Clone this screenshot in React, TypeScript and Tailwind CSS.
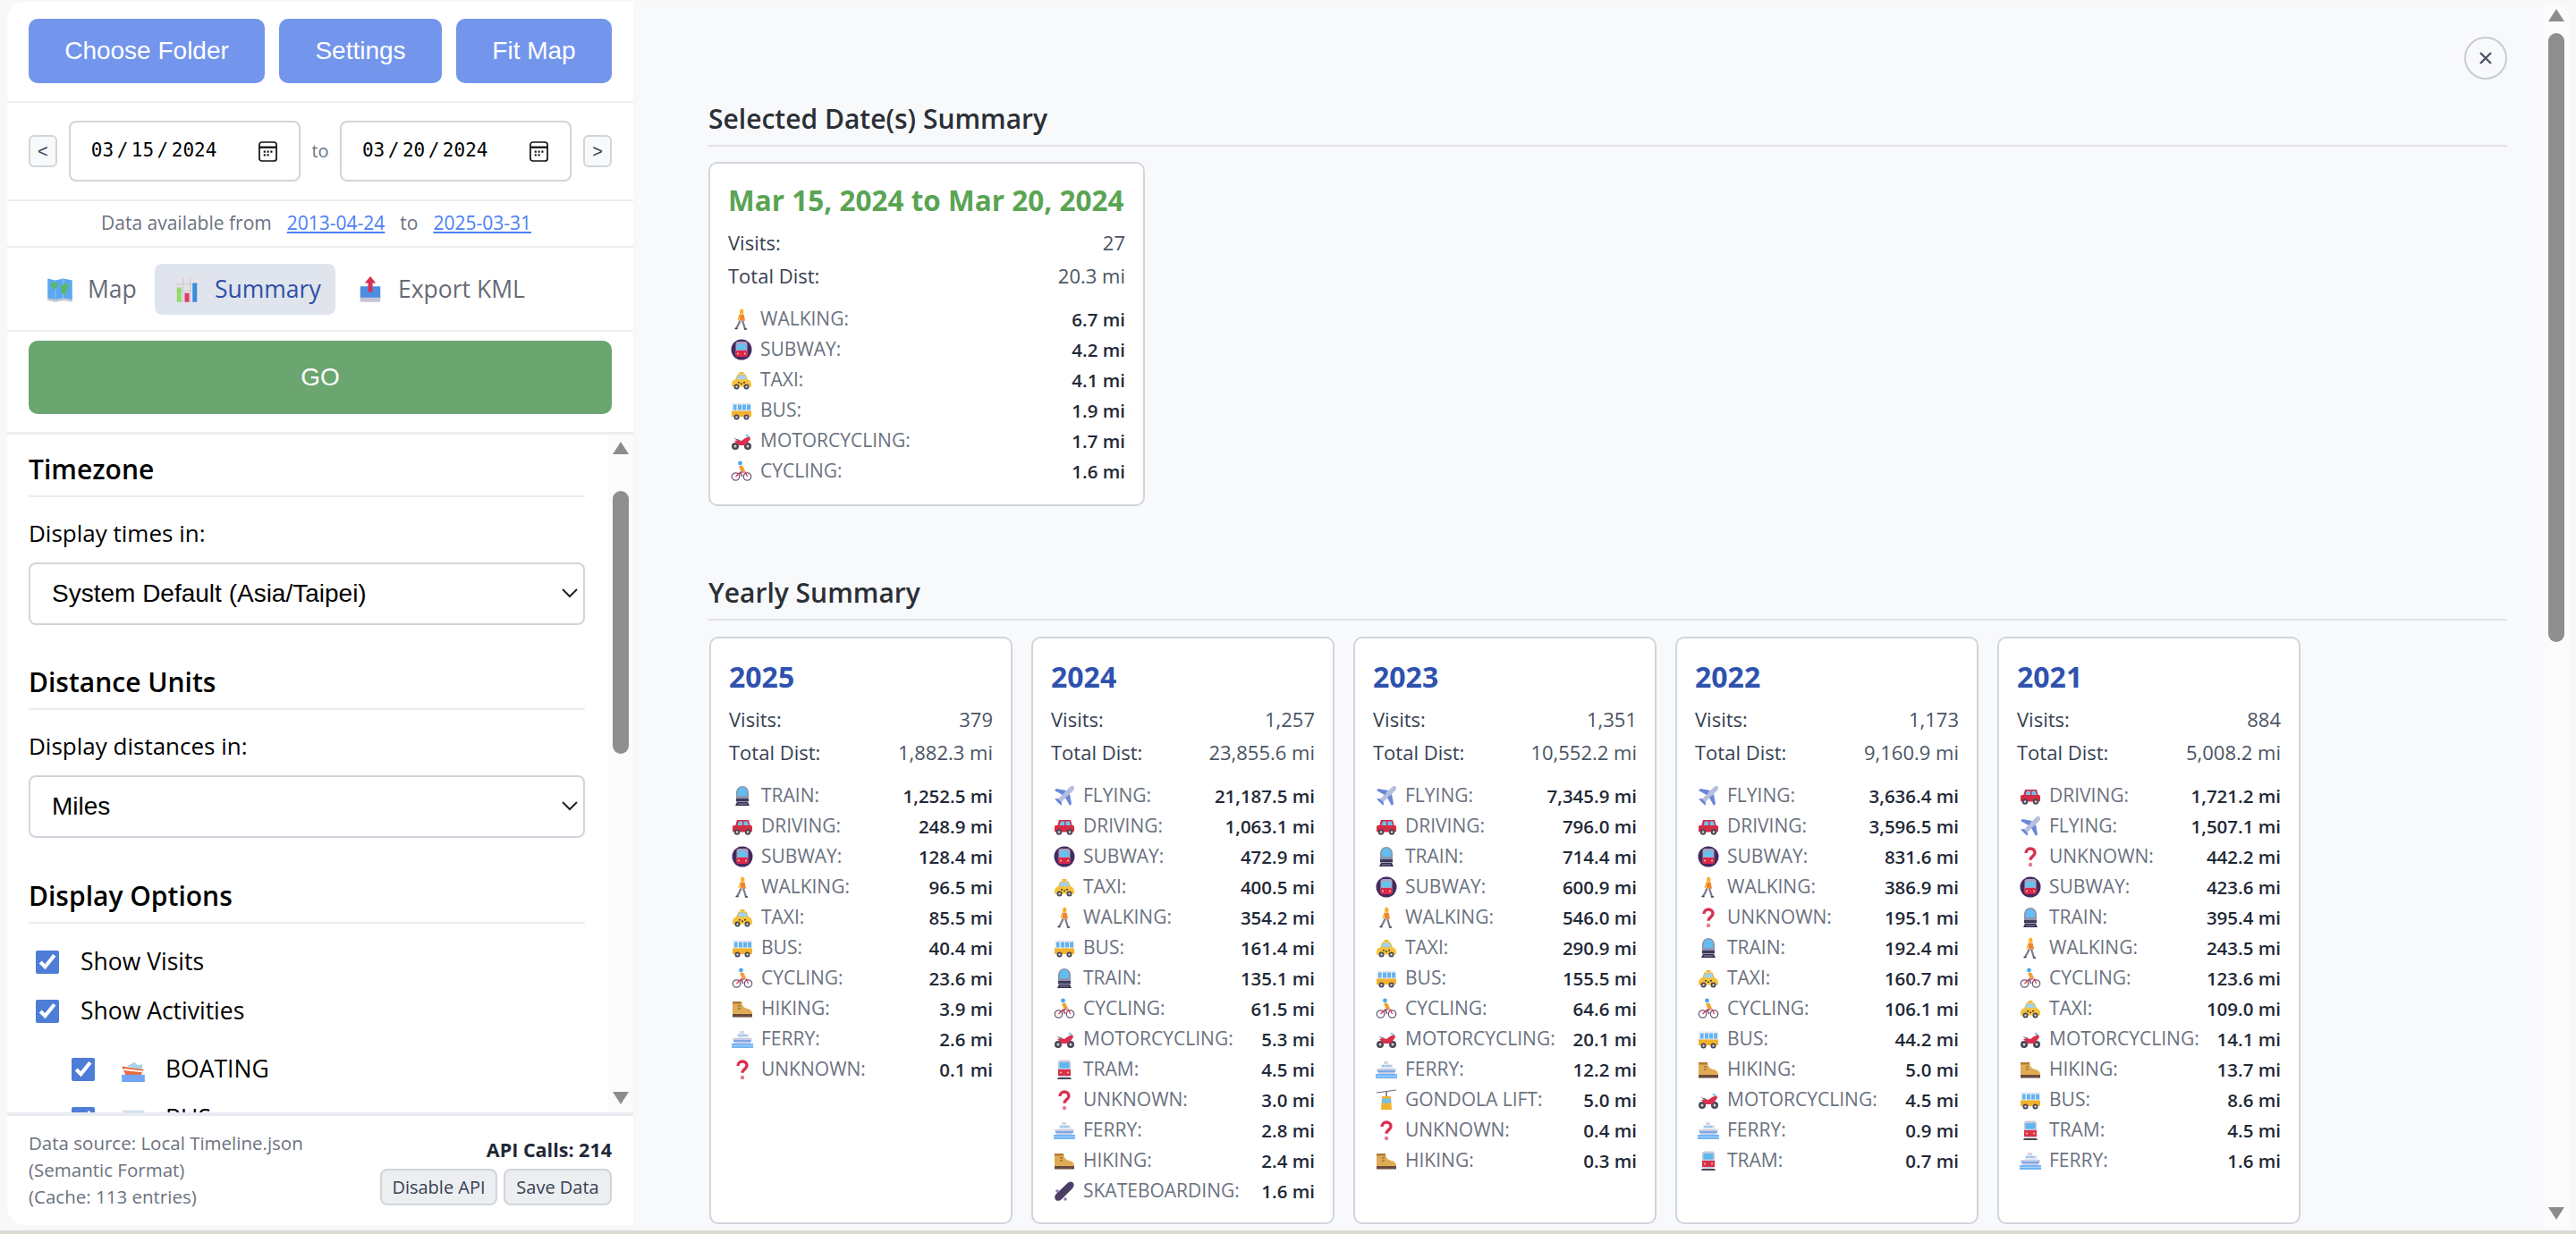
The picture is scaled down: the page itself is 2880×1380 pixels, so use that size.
import React from 'react';

const SANS = 'font-["Open_Sans",sans-serif]';

type IconName =
  | 'walking' | 'subway' | 'taxi' | 'bus' | 'motorcycling' | 'cycling' | 'train' | 'driving'
  | 'hiking' | 'ferry' | 'unknown' | 'flying' | 'tram' | 'skateboarding' | 'gondola' | 'boating'
  | 'map' | 'chart' | 'export';

const Emoji: React.FC<{ name: IconName; className?: string }> = ({ name, className = 'w-6 h-6' }) => {
  const shapes: Record<IconName, React.ReactNode> = {
    walking: (
      <>
        <path d="M10 4.500c0-2.500 1-4 2.200-4s2.300 1.500 2.300 4c0 1-1 1.500-2.300 1.500S10 5.500 10 4.500z" fill="#fbb125" />
        <path d="M9.500 6.500h5l1.500 7-2 .5-.5-2.500v2H10z" fill="#f0842c" />
        <path d="M10.500 13.500L8.500 18 6 22.500M13 13.500l1.500 4.500 1.500 5" fill="none" stroke="#7d7a8c" strokeWidth="2.200" />
        <path d="M10 7.500l-2 5.500" stroke="#fbb125" strokeWidth="1.400" fill="none" />
        <path d="M4.500 22.500h3M15 23h3" stroke="#433d57" strokeWidth="1.400" />
      </>
    ),
    subway: (
      <>
        <circle cx="12" cy="12" r="11.500" fill="#46295f" />
        <rect x="5.500" y="3" width="13" height="17" rx="3" fill="#a6a3c4" />
        <rect x="7" y="6" width="10" height="6" rx="1" fill="#63c3ef" />
        <rect x="5.500" y="13" width="13" height="7" rx="2" fill="#d9274f" />
        <circle cx="8" cy="16.500" r="1" fill="#ffd34d" />
        <circle cx="16" cy="16.500" r="1" fill="#ffd34d" />
      </>
    ),
    taxi: (
      <>
        <path d="M5.500 12l2.500-6h8l2.500 6z" fill="#9fd3f5" stroke="#f2b632" strokeWidth="1.200" />
        <rect x="9.500" y="3" width="5" height="2.500" rx=".6" fill="#f2b632" />
        <path d="M1 17c0-3.500 2-5.500 5-5.500h12c3 0 5 2 5 5.500v2.500H1z" fill="#f5c33b" />
        <path d="M8 14h2v1.500H8zM11 15.500h2V17h-2zM14 14h2v1.500h-2z" fill="#4a3a32" />
        <circle cx="6.500" cy="19.500" r="3" fill="#4a4653" />
        <circle cx="6.500" cy="19.500" r="1.200" fill="#d5d3df" />
        <circle cx="17.500" cy="19.500" r="3" fill="#4a4653" />
        <circle cx="17.500" cy="19.500" r="1.200" fill="#d5d3df" />
      </>
    ),
    bus: (
      <>
        <rect x="1" y="3.500" width="22" height="15" rx="1.500" fill="#eceaf1" />
        <rect x="1" y="12.500" width="22" height="6.500" fill="#f2b22f" />
        <path d="M3 5.500h3.500v6H3zM8 5.500h4v6H8zM13 5.500h4v6h-4zM18 5.500h4v6h-4z" fill="#62b4f2" />
        <circle cx="6.500" cy="19.500" r="3" fill="#4a4653" />
        <circle cx="6.500" cy="19.500" r="1.200" fill="#d5d3df" />
        <circle cx="17.500" cy="19.500" r="3" fill="#4a4653" />
        <circle cx="17.500" cy="19.500" r="1.200" fill="#d5d3df" />
      </>
    ),
    motorcycling: (
      <>
        <circle cx="5" cy="18" r="4" fill="#4a4653" />
        <circle cx="5" cy="18" r="1.500" fill="#d5d3df" />
        <circle cx="19" cy="18" r="4" fill="#4a4653" />
        <circle cx="19" cy="18" r="1.500" fill="#d5d3df" />
        <path d="M4 12l5-1 3 1 4-3 5-2 1 3-3 4-3 3H9z" fill="#d9304f" />
        <path d="M3 9l6 1.500L8 12z" fill="#6b5e72" />
        <path d="M17 5.500l3 1.500" stroke="#7fc3ee" strokeWidth="2" />
      </>
    ),
    cycling: (
      <>
        <circle cx="5.500" cy="18" r="4.200" fill="none" stroke="#6b5a78" strokeWidth="1.300" />
        <circle cx="18.500" cy="18" r="4.200" fill="none" stroke="#6b5a78" strokeWidth="1.300" />
        <path d="M5.500 18l5-5h6l2 5M10.500 13l2 5" fill="none" stroke="#d9304f" strokeWidth="1.200" />
        <circle cx="10.500" cy="3" r="2.400" fill="#4aa8ed" />
        <path d="M9 6.500l4-1 3 6-4 1.500z" fill="#f0a02c" />
        <path d="M12.500 12l-1 3.500 1.500 2" fill="none" stroke="#7d7a8c" strokeWidth="1.600" />
      </>
    ),
    train: (
      <>
        <path d="M5 9c0-5 3-8 7-8s7 3 7 8v9H5z" fill="#8f94ad" />
        <path d="M7 8c0-3.500 2-5.500 5-5.500S17 4.500 17 8v4H7z" fill="#62bdf0" />
        <rect x="5" y="15" width="14" height="3.500" fill="#3e3a5c" />
        <path d="M6 19l-2 4h16l-2-4z" fill="#34304f" />
        <path d="M7 21h10" stroke="#a9a6c0" strokeWidth=".8" />
      </>
    ),
    driving: (
      <>
        <path d="M6 5h13l2 7H4z" fill="#d32c43" />
        <path d="M8 6.500h4v4.500H6.500zM13.500 6.500h4.300l1.200 4.500h-5.500z" fill="#6fc1f0" />
        <rect x="1" y="11" width="22" height="7.500" rx="1.500" fill="#d32c43" />
        <circle cx="6" cy="18.500" r="3.200" fill="#4a4653" />
        <circle cx="6" cy="18.500" r="1.300" fill="#d5d3df" />
        <circle cx="18" cy="18.500" r="3.200" fill="#4a4653" />
        <circle cx="18" cy="18.500" r="1.300" fill="#d5d3df" />
      </>
    ),
    hiking: (
      <>
        <path d="M1 4h10c.500 4 1.500 6 5 7.500 4 1 7 2 7 6.500H1z" fill="#e0ab55" />
        <path d="M1 4h10v2.500H1z" fill="#b27a35" />
        <path d="M7 9h3M7 12h3" stroke="#7d5a2c" strokeWidth="1.200" />
        <rect x="1" y="18" width="22" height="3.500" fill="#6b4a3e" />
      </>
    ),
    ferry: (
      <>
        <path d="M9 3h5v3H9z" fill="#d9d6e4" />
        <path d="M6 6h13l1 5H6z" fill="#eceaf1" />
        <path d="M7.500 8h10" stroke="#4aa8ed" strokeWidth="1.300" strokeDasharray="1.500 .8" />
        <path d="M1 11h22l-2 6H3z" fill="#c9cde6" />
        <path d="M2 14h20" stroke="#4f8fe8" strokeWidth="1.200" />
        <rect x="0" y="17" width="24" height="5" fill="#74b5f5" />
        <path d="M0 19.500h24" stroke="#a6d3fa" strokeWidth="1" />
      </>
    ),
    unknown: (
      <>
        <path d="M7 8c0-3 2.300-5 5-5s5 2 5 4.700c0 3.800-5 4-5 8" fill="none" stroke="#d9304f" strokeWidth="3.400" />
        <circle cx="12" cy="21" r="2.200" fill="#e8798e" />
      </>
    ),
    flying: (
      <>
        <path d="M22.500 1.500c-1.500-1-3.500-.3-5 1.200L4 16.500l3.500 3.500L21.500 6.500c1.500-1.500 2-3.500 1-5z" fill="#b7bfe0" />
        <path d="M14 6L3 4 1 6l9 5zM18 10l2 11-2 2-5-9z" fill="#6a86d8" />
        <path d="M4.500 15L1 15.500 8.500 23 9 19.500z" fill="#6a86d8" />
      </>
    ),
    tram: (
      <>
        <rect x="5" y="1.500" width="14" height="19" rx="3" fill="#c9c7db" />
        <rect x="6.500" y="4" width="11" height="6.500" rx="1" fill="#5eb8ee" />
        <rect x="5" y="12" width="14" height="7" fill="#d9304f" />
        <circle cx="8" cy="15.500" r="1" fill="#ffd34d" />
        <circle cx="16" cy="15.500" r="1" fill="#ffd34d" />
        <path d="M5 21h14l1 2H4z" fill="#4a4653" />
      </>
    ),
    skateboarding: (
      <>
        <path d="M21.500 2.500c2 2 1 5-1 7L9 21c-2 2-5 2.500-6.500 1S.500 17.500 3 15L15 3.500c2-2 4.500-3 6.500-1z" fill="#4a3d66" />
        <circle cx="4" cy="12" r="1.800" fill="#8f7fb0" />
        <circle cx="13" cy="21" r="1.800" fill="#8f7fb0" />
      </>
    ),
    gondola: (
      <>
        <path d="M1 4L23 1" stroke="#6b6878" strokeWidth="1.200" />
        <path d="M12 3v6" stroke="#6b6878" strokeWidth="1.500" />
        <path d="M7 8h10l1 15H6z" fill="#f2b22f" />
        <rect x="7" y="10.500" width="10" height="5" fill="#6fc1f0" />
      </>
    ),
    boating: (
      <>
        <path d="M6 9l7-4 3 3 5-1-1 5z" fill="#a6d3e8" />
        <path d="M1 9l21 3-3 6H5z" fill="#e86a3c" />
        <path d="M3 12l18 2" stroke="#fff" strokeWidth="1.600" />
        <rect x="1" y="17" width="22" height="7" fill="#74a5f5" />
      </>
    ),
    map: (
      <>
        <path d="M1 2l7 1.500L15 2l8 1.500V21l-8-1.500L8 21l-7-1.500z" fill="#5ba8ee" />
        <path d="M8 3.500V21M15 2v17.500" stroke="#8ec6f5" strokeWidth=".8" />
        <path d="M4 6l5-1 1 4-3 3-1-2-2-1zM12 9l5-3 3 2-2 4-1 5-3-2z" fill="#5db56a" />
        <path d="M1 19.500L8 21l7-1.500 8 1.500v2l-8-1.500-7 1.500-7-1.500z" fill="#c5c3d2" />
      </>
    ),
    chart: (
      <>
        <rect x="2" y="1" width="20" height="22" fill="#e5e3ea" />
        <path d="M2 7h20M2 13h20M8.500 1v22M15 1v22" stroke="#c6c4cf" strokeWidth=".8" />
        <rect x="3" y="10" width="4" height="13" fill="#8edb6a" />
        <rect x="10" y="15" width="4" height="8" fill="#e03a68" />
        <rect x="17" y="6" width="4" height="17" fill="#3a8ddb" />
      </>
    ),
    export: (
      <>
        <path d="M3 9h18v11H3z" fill="#4d8ee0" />
        <path d="M3 19h18v4H3z" fill="#c9c2dc" />
        <path d="M12 0l5 6h-3v8h-4V6H7z" fill="#d9304f" />
      </>
    ),
  };
  return (
    <svg viewBox="0 0 24 24" preserveAspectRatio="xMidYMid meet" className={`${className} shrink-0`} aria-hidden="true">
      {shapes[name]}
    </svg>
  );
};

type Mode = [IconName, string, string];

interface SummaryCardProps {
  title: string;
  titleClass: string;
  visits: string;
  total: string;
  modes: Mode[];
  className: string;
}

const SummaryCard: React.FC<SummaryCardProps> = ({ title, titleClass, visits, total, modes, className }) => (
  <div className={`bg-white border-2 border-[#d1d5db] rounded-[10px] pl-[20px] pr-[20px] shrink-0 ${className}`}>
    <div className={`leading-[40px] font-bold ${titleClass}`}>{title}</div>
    <div className="flex justify-between text-[22px] leading-[30px] text-[#374151] mt-[12px]">
      <span>Visits:</span>
      <span className="text-[#4b5563]">{visits}</span>
    </div>
    <div className="flex justify-between text-[22px] leading-[30px] text-[#374151] mt-[7px]">
      <span>Total Dist:</span>
      <span className="text-[#4b5563]">{total}</span>
    </div>
    <div className="mt-[17px]">
      {modes.map(([icon, label, value]) => (
        <div key={label} className="flex items-center h-[34px] text-[21px]">
          <span className="w-[36px] shrink-0 pl-[3px]">
            <Emoji name={icon} />
          </span>
          <span className="text-[#6b7280] flex-1 whitespace-nowrap">{label}:</span>
          <span className="text-[#1f2937] text-[20.500px] font-semibold whitespace-nowrap">{value}</span>
        </div>
      ))}
    </div>
  </div>
);

const selected: Mode[] = [
  ['walking', 'WALKING', '6.7 mi'],
  ['subway', 'SUBWAY', '4.2 mi'],
  ['taxi', 'TAXI', '4.1 mi'],
  ['bus', 'BUS', '1.9 mi'],
  ['motorcycling', 'MOTORCYCLING', '1.7 mi'],
  ['cycling', 'CYCLING', '1.6 mi'],
];

const years: { year: string; visits: string; total: string; modes: Mode[] }[] = [
  {
    year: '2025', visits: '379', total: '1,882.3 mi',
    modes: [
      ['train', 'TRAIN', '1,252.5 mi'],
      ['driving', 'DRIVING', '248.9 mi'],
      ['subway', 'SUBWAY', '128.4 mi'],
      ['walking', 'WALKING', '96.5 mi'],
      ['taxi', 'TAXI', '85.5 mi'],
      ['bus', 'BUS', '40.4 mi'],
      ['cycling', 'CYCLING', '23.6 mi'],
      ['hiking', 'HIKING', '3.9 mi'],
      ['ferry', 'FERRY', '2.6 mi'],
      ['unknown', 'UNKNOWN', '0.1 mi'],
    ],
  },
  {
    year: '2024', visits: '1,257', total: '23,855.6 mi',
    modes: [
      ['flying', 'FLYING', '21,187.5 mi'],
      ['driving', 'DRIVING', '1,063.1 mi'],
      ['subway', 'SUBWAY', '472.9 mi'],
      ['taxi', 'TAXI', '400.5 mi'],
      ['walking', 'WALKING', '354.2 mi'],
      ['bus', 'BUS', '161.4 mi'],
      ['train', 'TRAIN', '135.1 mi'],
      ['cycling', 'CYCLING', '61.5 mi'],
      ['motorcycling', 'MOTORCYCLING', '5.3 mi'],
      ['tram', 'TRAM', '4.5 mi'],
      ['unknown', 'UNKNOWN', '3.0 mi'],
      ['ferry', 'FERRY', '2.8 mi'],
      ['hiking', 'HIKING', '2.4 mi'],
      ['skateboarding', 'SKATEBOARDING', '1.6 mi'],
    ],
  },
  {
    year: '2023', visits: '1,351', total: '10,552.2 mi',
    modes: [
      ['flying', 'FLYING', '7,345.9 mi'],
      ['driving', 'DRIVING', '796.0 mi'],
      ['train', 'TRAIN', '714.4 mi'],
      ['subway', 'SUBWAY', '600.9 mi'],
      ['walking', 'WALKING', '546.0 mi'],
      ['taxi', 'TAXI', '290.9 mi'],
      ['bus', 'BUS', '155.5 mi'],
      ['cycling', 'CYCLING', '64.6 mi'],
      ['motorcycling', 'MOTORCYCLING', '20.1 mi'],
      ['ferry', 'FERRY', '12.2 mi'],
      ['gondola', 'GONDOLA LIFT', '5.0 mi'],
      ['unknown', 'UNKNOWN', '0.4 mi'],
      ['hiking', 'HIKING', '0.3 mi'],
    ],
  },
  {
    year: '2022', visits: '1,173', total: '9,160.9 mi',
    modes: [
      ['flying', 'FLYING', '3,636.4 mi'],
      ['driving', 'DRIVING', '3,596.5 mi'],
      ['subway', 'SUBWAY', '831.6 mi'],
      ['walking', 'WALKING', '386.9 mi'],
      ['unknown', 'UNKNOWN', '195.1 mi'],
      ['train', 'TRAIN', '192.4 mi'],
      ['taxi', 'TAXI', '160.7 mi'],
      ['cycling', 'CYCLING', '106.1 mi'],
      ['bus', 'BUS', '44.2 mi'],
      ['hiking', 'HIKING', '5.0 mi'],
      ['motorcycling', 'MOTORCYCLING', '4.5 mi'],
      ['ferry', 'FERRY', '0.9 mi'],
      ['tram', 'TRAM', '0.7 mi'],
    ],
  },
  {
    year: '2021', visits: '884', total: '5,008.2 mi',
    modes: [
      ['driving', 'DRIVING', '1,721.2 mi'],
      ['flying', 'FLYING', '1,507.1 mi'],
      ['unknown', 'UNKNOWN', '442.2 mi'],
      ['subway', 'SUBWAY', '423.6 mi'],
      ['train', 'TRAIN', '395.4 mi'],
      ['walking', 'WALKING', '243.5 mi'],
      ['cycling', 'CYCLING', '123.6 mi'],
      ['taxi', 'TAXI', '109.0 mi'],
      ['motorcycling', 'MOTORCYCLING', '14.1 mi'],
      ['hiking', 'HIKING', '13.7 mi'],
      ['bus', 'BUS', '8.6 mi'],
      ['tram', 'TRAM', '4.5 mi'],
      ['ferry', 'FERRY', '1.6 mi'],
    ],
  },
];

const ScrollBar: React.FC<{ width: string; thumbTop: string; thumbHeight: string; bottom: string }> = ({ width, thumbTop, thumbHeight, bottom }) => (
  <div className={`${width} ${bottom} shrink-0 bg-[#fbfbfb] flex flex-col items-center pt-[8px]`}>
    <div className="w-0 h-0 border-x-[9px] border-x-transparent border-b-[14px] border-b-[#8c8c8c]" />
    <div className={`w-[18px] ${thumbTop} ${thumbHeight} rounded-[9px] bg-[#8f8f8f]`} />
    <div className="flex-1" />
    <div className="w-0 h-0 border-x-[9px] border-x-transparent border-t-[14px] border-t-[#8c8c8c]" />
  </div>
);

const PrimaryButton: React.FC<{ label: string; className: string }> = ({ label, className }) => (
  <button className={`h-[72px] rounded-[10px] bg-[#7395ec] text-white text-[28px] font-["Liberation_Sans",sans-serif] ${className}`}>
    {label}
  </button>
);

const DateBox: React.FC<{ value: string }> = ({ value }) => (
  <div className="w-[260px] h-[68px] border-2 border-[#d1d5db] rounded-[8px] bg-white flex items-center pl-[22px]">
    <input
      type="date"
      defaultValue={value}
      className='w-[186px] bg-transparent text-[21px] text-black font-["DejaVu_Sans_Mono",monospace] [&::-webkit-calendar-picker-indicator]:hidden [&::-webkit-datetime-edit-text]:px-[2.5px]'
    />
    <svg viewBox="0 0 22 24" className="w-[21px] h-[23px] ml-[2px] shrink-0" aria-hidden="true">
      <rect x="1" y="1" width="20" height="22" rx="3" fill="none" stroke="#111" strokeWidth="1.800" />
      <path d="M1 7h20" stroke="#111" strokeWidth="2.400" />
      <path d="M6 11h2.200v2.200H6zM10 11h2.200v2.200H10zM14 11h2.200v2.200H14zM6 15h2.200v2.200H6zM10 15h2.200v2.200H10z" fill="#111" />
    </svg>
  </div>
);

const StepButton: React.FC<{ label: string }> = ({ label }) => (
  <button className='w-[32px] h-[36px] border-2 border-[#d1d5db] rounded-[6px] bg-[#f8f9fa] text-[20px] leading-none text-[#374151] font-["Liberation_Sans",sans-serif]'>
    {label}
  </button>
);

const Tab: React.FC<{ icon: IconName; label: string; active?: boolean; className: string }> = ({ icon, label, active, className }) => (
  <div className={`flex items-center h-[57px] rounded-[8px] text-[26.500px] ${active ? 'bg-[#e0e4ed] text-[#2f4fa8]' : 'text-[#666b75]'} ${className}`}>
    <Emoji name={icon} className="w-[30px] h-[36px]" />
    <span className="ml-[16px]">{label}</span>
  </div>
);

const SectionHead: React.FC<{ label: string; className?: string }> = ({ label, className = '' }) => (
  <div className={`mr-[25px] border-b-2 border-[#e9ebf0] h-[50px] text-[30px] leading-[38px] font-semibold text-black ${className}`}>
    {label}
  </div>
);

const UnitSelect: React.FC<{ label: string }> = ({ label }) => (
  <div className="relative w-[622px] h-[70px] mt-[15px]">
    <select className='block appearance-none w-full h-full border-2 border-[#d1d5db] rounded-[8px] bg-white pl-[24px] text-[28px] text-black font-["Liberation_Sans",sans-serif]'>
      <option>{label}</option>
    </select>
    <svg viewBox="0 0 18 11" className="absolute right-[8px] top-[29px] w-[18px] h-[11px] pointer-events-none" aria-hidden="true">
      <path d="M1 1l8 8 8-8" fill="none" stroke="#222" strokeWidth="2" />
    </svg>
  </div>
);

const Check: React.FC<{ label: string; icon?: IconName; nested?: boolean; className: string }> = ({ label, icon, nested, className }) => (
  <label className={`flex items-center text-[26.500px] text-black h-[30px] ${nested ? 'ml-[48px]' : 'ml-[8px]'} ${className}`}>
    <input type="checkbox" defaultChecked className="w-[26px] h-[26px] accent-[#4d7dd6] shrink-0" />
    {icon && <Emoji name={icon} className="w-[28px] h-[28px] ml-[29px]" />}
    <span className={icon ? 'ml-[22px]' : 'ml-[24px]'}>{label}</span>
  </label>
);

export default function App() {
  return (
    <div className={`w-[2880px] h-[1380px] overflow-hidden flex flex-col bg-[#f8f8f8] ${SANS}`}>
      <div className="flex h-[1376px] pl-[8px] pt-[2px] pr-[7px]">
        {/* sidebar */}
        <aside className="w-[700px] h-[1368px] shrink-0 flex flex-col bg-white rounded-l-[20px]">
          <div className="h-[111px] shrink-0 pt-[19px] px-[24px] flex gap-[16px]">
            <PrimaryButton label="Choose Folder" className="w-[264px]" />
            <PrimaryButton label="Settings" className="w-[182px]" />
            <PrimaryButton label="Fit Map" className="w-[174px]" />
          </div>
          <div className="h-[110px] shrink-0 border-t-2 border-[#eceef2] px-[24px] flex items-center">
            <StepButton label="<" />
            <div className="w-[13px]" />
            <DateBox value="2024-03-15" />
            <span className="w-[44px] text-center text-[20px] text-[#6b7280]">to</span>
            <DateBox value="2024-03-20" />
            <div className="w-[13px]" />
            <StepButton label=">" />
          </div>
          <div className="h-[52px] shrink-0 border-t-2 border-[#eceef2] pr-[9px] flex items-center justify-center text-[21px] text-[#6b7280]">
            <span>Data available from</span>
            <a className="ml-[17px] text-[#4a80f5] underline">2013-04-24</a>
            <span className="ml-[17px]">to</span>
            <a className="ml-[17px] text-[#4a80f5] underline">2025-03-31</a>
          </div>
          <div className="h-[94px] shrink-0 border-t-2 border-[#eceef2] pl-[44px] pt-[18px] flex">
            <Tab icon="map" label="Map" className="w-[121px]" />
            <Tab icon="chart" label="Summary" active className="w-[202px] pl-[21px]" />
            <Tab icon="export" label="Export KML" className="ml-[24px]" />
          </div>
          <div className="h-[117px] shrink-0 border-t-2 border-b-[3px] border-[#eceef2] px-[24px] pt-[10px]">
            <button className='w-full h-[82px] rounded-[10px] bg-[#6ba56f] text-white text-[28px] font-["Liberation_Sans",sans-serif]'>
              GO
            </button>
          </div>

          {/* scrollable settings */}
          <div className="flex-1 min-h-0 flex overflow-hidden">
            <div className="flex-1 overflow-hidden pl-[24px] pt-[20px]">
              <SectionHead label="Timezone" />
              <div className="mt-[22px] text-[26px] leading-[36px] text-black">Display times in:</div>
              <UnitSelect label="System Default (Asia/Taipei)" />
              <SectionHead label="Distance Units" className="mt-[45px]" />
              <div className="mt-[22px] text-[26px] leading-[36px] text-black">Display distances in:</div>
              <UnitSelect label="Miles" />
              <SectionHead label="Display Options" className="mt-[46px]" />
              <Check label="Show Visits" className="mt-[28px]" />
              <Check label="Show Activities" className="mt-[25px]" />
              <Check label="BOATING" icon="boating" nested className="mt-[35px]" />
              <Check label="BUS" icon="bus" nested className="mt-[25px]" />
            </div>
            <ScrollBar width="w-[29px]" bottom="pb-[9px]" thumbTop="mt-[41px]" thumbHeight="h-[294px]" />
          </div>

          <div className="h-[126px] shrink-0 border-t-4 border-[#e9ebf0] pl-[24px] pr-[24px] flex justify-between pt-[15px]">
            <div className="text-[20.500px] leading-[30px] text-[#6b7280]">
              <div>Data source: Local Timeline.json</div>
              <div>(Semantic Format)</div>
              <div>(Cache: 113 entries)</div>
            </div>
            <div className="flex flex-col items-end">
              <div className="text-[21.500px] leading-[28px] font-bold text-[#1f2937] mt-[9px]">API Calls: 214</div>
              <div className="flex gap-[7px] mt-[7px]">
                <button className="h-[41px] w-[131px] border-2 border-[#d1d5db] rounded-[8px] bg-[#eceef2] text-[20px] text-[#374151]">Disable API</button>
                <button className="h-[41px] w-[121px] border-2 border-[#d1d5db] rounded-[8px] bg-[#eceef2] text-[20px] text-[#374151]">Save Data</button>
              </div>
            </div>
          </div>
        </aside>

        {/* summary panel */}
        <main className="flex-1 min-w-0 ml-[4px] flex rounded-tr-[20px] overflow-hidden bg-[#f8f9fb]">
          <div className="relative flex-1 min-w-0 pl-[80px] pr-[40px] pt-[111px] overflow-hidden">
            <button className="absolute top-[39px] right-[40px] w-[48px] h-[48px] rounded-full border-2 border-[#c9cbce] flex items-center justify-center">
              <svg viewBox="0 0 16 16" className="w-[16px] h-[16px]">
                <path d="M2 2l12 12M14 2L2 14" stroke="#4b5563" strokeWidth="2.400" />
              </svg>
            </button>
            <h2 className="h-[51px] border-b-2 border-[#e1e3e8] text-[30px] leading-[40px] font-semibold text-[#2b2f36]">
              Selected Date(s) Summary
            </h2>
            <div className="flex mt-[17px]">
              <SummaryCard
                title="Mar 15, 2024 to Mar 20, 2024"
                titleClass="text-[31.500px] text-[#5aa454]"
                visits="27"
                total="20.3 mi"
                modes={selected}
                className="w-[488px] pt-[21px] pb-[20px]"
              />
            </div>
            <h2 className="mt-[77px] h-[51px] border-b-2 border-[#e1e3e8] text-[30px] leading-[40px] font-semibold text-[#2b2f36]">
              Yearly Summary
            </h2>
            <div className="flex gap-[21px] ml-[1px] mt-[18px]">
              {years.map((y) => (
                <SummaryCard
                  key={y.year}
                  title={y.year}
                  titleClass="text-[32px] text-[#2f52ae]"
                  visits={y.visits}
                  total={y.total}
                  modes={y.modes}
                  className="w-[339px] h-[657px] pt-[23px]"
                />
              ))}
            </div>
          </div>
          <ScrollBar width="w-[30px]" bottom="pb-[12px]" thumbTop="mt-[13px]" thumbHeight="h-[681px]" />
        </main>
      </div>
      <div className="flex-1 bg-[#dcd9d2]" />
    </div>
  );
}
